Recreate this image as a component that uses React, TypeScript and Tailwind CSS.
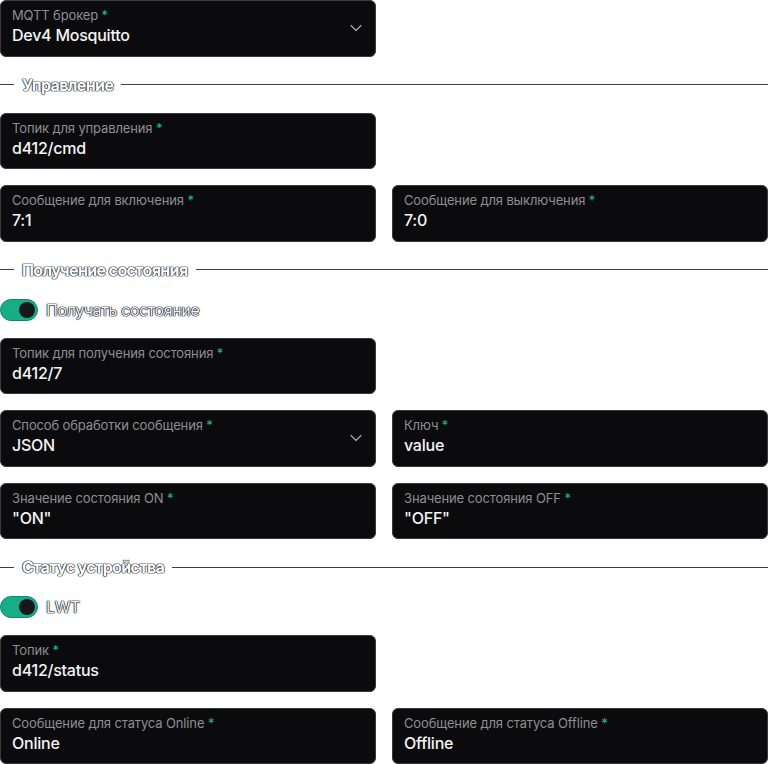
import { ChevronDown } from 'lucide-react';

const font = { fontFamily: 'Inter, "Noto Sans", sans-serif' };

// dark halo around light captions on the white page
const halo =
  '[text-shadow:0_0_1px_#0b1020,0_0_1px_#0b1020,0_0_1px_#0b1020,0_0_1px_#0b1020]';

interface FieldProps {
  label: string;
  value: string;
  select?: boolean;
}

function Field({ label, value, select }: FieldProps) {
  return (
    <div className="relative h-[56.5px] rounded-md border border-[#3a3a3c] bg-[#0b0b0d] pl-[11px] pt-[5px]">
      <div className="text-[13px] leading-[18px] tracking-[-0.01em] text-[#8e8e93]">
        {label} <span className="text-[#1fb98d]">*</span>
      </div>
      <div className="text-[16px] leading-[22px] font-[460] tracking-[-0.015em] text-[#f4f4f5]">
        {value}
      </div>
      {select && (
        <ChevronDown
          className="absolute right-[9px] top-[17px] h-5 w-5 text-[#a1a1aa]"
          strokeWidth={1.6}
        />
      )}
    </div>
  );
}

function SectionTitle({ title }: { title: string }) {
  return (
    <div className="flex items-center h-6">
      <div className="w-[14px] h-px bg-[#3f3f46]" />
      <span className={`px-2 text-[16px] font-bold tracking-[-0.04em] text-white ${halo}`}>
        {title}
      </span>
      <div className="flex-1 h-px bg-[#3f3f46]" />
    </div>
  );
}

function Toggle({ label }: { label: string }) {
  return (
    <div className="flex items-center gap-2 h-6">
      <div className="flex items-center justify-end w-[38px] h-[22px] rounded-full bg-[#17ad88] border border-[#12866a] px-[2px]">
        <div className="w-[16px] h-[16px] rounded-full bg-[#18181b]" />
      </div>
      <span className={`text-[16px] font-normal tracking-[-0.025em] text-[#f4f4f5] ${halo}`}>
        {label}
      </span>
    </div>
  );
}

function Row({ children }: { children: React.ReactNode }) {
  return <div className="grid grid-cols-2 gap-4">{children}</div>;
}

export default function App() {
  return (
    <div className="w-[768px] h-[764px] bg-white overflow-hidden" style={font}>
      <div className="flex flex-col gap-4">
        <Row>
          <Field label="MQTT брокер" value="Dev4 Mosquitto" select />
        </Row>

        {/* Управление */}
        <SectionTitle title="Управление" />
        <Row>
          <Field label="Топик для управления" value="d412/cmd" />
        </Row>
        <Row>
          <Field label="Сообщение для включения" value="7:1" />
          <Field label="Сообщение для выключения" value="7:0" />
        </Row>

        {/* Получение состояния */}
        <SectionTitle title="Получение состояния" />
        <Toggle label="Получать состояние" />
        <Row>
          <Field label="Топик для получения состояния" value="d412/7" />
        </Row>
        <Row>
          <Field label="Способ обработки сообщения" value="JSON" select />
          <Field label="Ключ" value="value" />
        </Row>
        <Row>
          <Field label="Значение состояния ON" value={'"ON"'} />
          <Field label="Значение состояния OFF" value={'"OFF"'} />
        </Row>

        {/* Статус устройства */}
        <SectionTitle title="Статус устройства" />
        <Toggle label="LWT" />
        <Row>
          <Field label="Топик" value="d412/status" />
        </Row>
        <Row>
          <Field label="Сообщение для статуса Online" value="Online" />
          <Field label="Сообщение для статуса Offline" value="Offline" />
        </Row>
      </div>
    </div>
  );
}
